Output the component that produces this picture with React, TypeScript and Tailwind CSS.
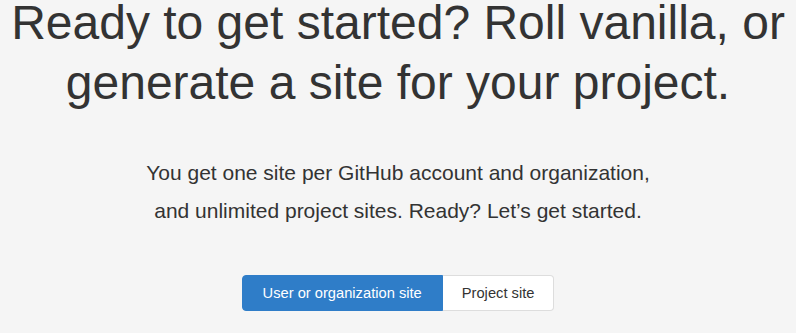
export default function App() {
  return (
    <div className="min-h-[333px] w-full bg-[#f5f5f5] text-[#333] font-['Liberation_Sans',Arial,sans-serif] overflow-hidden">
      <div className="flex flex-col items-center text-center">
        <h1 className="text-[48px] leading-[60px] -mt-[7px] px-2">
          Ready to get started? Roll vanilla, or generate a site for your project.
        </h1>
        <p className="mt-[41px] text-[21px] leading-[38px]">
          You get one site per GitHub account and organization,
          <br />
          and unlimited project sites. Ready? Let’s get started.
        </p>
        <div className="mt-[45px] flex">
          <button className="h-[36px] px-[20px] rounded-l-[4px] bg-[#2f7dc8] text-white text-[14.7px] border border-[#2f7dc8]">
            User or organization site
          </button>
          <button className="h-[36px] px-[19px] rounded-r-[4px] bg-white text-[#333] text-[14.7px] border border-[#ddd] border-l-0">
            Project site
          </button>
        </div>
      </div>
    </div>
  );
}
